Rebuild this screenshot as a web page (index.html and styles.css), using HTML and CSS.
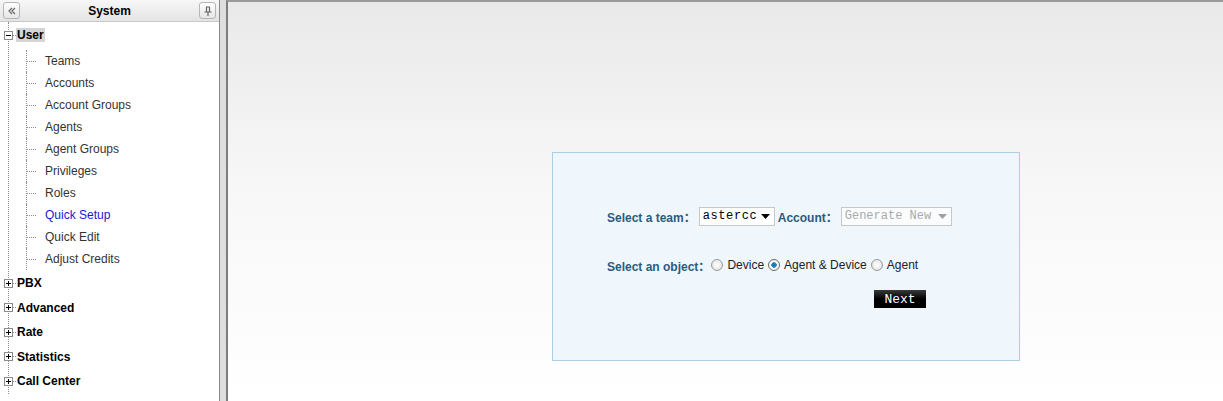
FILE: index.html
```html
<!DOCTYPE html>
<html lang="en">
<head>
    <meta charset="UTF-8">
    <title>Quick Setup</title>
    <link rel="stylesheet" href="styles.css">
</head>
<body>
    <div class="layout">
        <div class="sidebar">
            <div class="side-header">
                <span class="tool-btn">
                    <svg width="10" height="10" viewBox="0 0 10 10"><path d="M5 2 L2 5 L5 8 M8 2 L5 5 L8 8" fill="none" stroke="#666" stroke-width="1.2"/></svg>
                </span>
                <span class="side-title">System</span>
                <span class="tool-btn">
                    <svg width="10" height="10" viewBox="0 0 10 10"><path d="M3 1 H7 M3.5 1 V6 M6.5 1 V6 M1.5 6 H8.5 M5 6 V10" fill="none" stroke="#666" stroke-width="1.2"/></svg>
                </span>
            </div>

            <div class="tree">
                <div class="node open">
                    <div class="node-row">
                        <span class="toggle"><svg width="9" height="9" viewBox="0 0 9 9"><path d="M2 4.5 H7" stroke="#000" stroke-width="1"/></svg></span>
                        <span class="dash"></span>
                        <span class="node-label current">User</span>
                    </div>
                    <ul class="children">
                        <li><span class="dash"></span><a href="#">Teams</a></li>
                        <li><span class="dash"></span><a href="#">Accounts</a></li>
                        <li><span class="dash"></span><a href="#">Account Groups</a></li>
                        <li><span class="dash"></span><a href="#">Agents</a></li>
                        <li><span class="dash"></span><a href="#">Agent Groups</a></li>
                        <li><span class="dash"></span><a href="#">Privileges</a></li>
                        <li><span class="dash"></span><a href="#">Roles</a></li>
                        <li><span class="dash"></span><a href="#" class="active">Quick Setup</a></li>
                        <li><span class="dash"></span><a href="#">Quick Edit</a></li>
                        <li class="last"><span class="dash"></span><a href="#">Adjust Credits</a></li>
                    </ul>
                </div>
                <div class="node">
                    <div class="node-row">
                        <span class="toggle"><svg width="9" height="9" viewBox="0 0 9 9"><path d="M2 4.5 H7 M4.5 2 V7" stroke="#000" stroke-width="1"/></svg></span>
                        <span class="dash"></span>
                        <span class="node-label">PBX</span>
                    </div>
                </div>
                <div class="node">
                    <div class="node-row">
                        <span class="toggle"><svg width="9" height="9" viewBox="0 0 9 9"><path d="M2 4.5 H7 M4.5 2 V7" stroke="#000" stroke-width="1"/></svg></span>
                        <span class="dash"></span>
                        <span class="node-label">Advanced</span>
                    </div>
                </div>
                <div class="node">
                    <div class="node-row">
                        <span class="toggle"><svg width="9" height="9" viewBox="0 0 9 9"><path d="M2 4.5 H7 M4.5 2 V7" stroke="#000" stroke-width="1"/></svg></span>
                        <span class="dash"></span>
                        <span class="node-label">Rate</span>
                    </div>
                </div>
                <div class="node">
                    <div class="node-row">
                        <span class="toggle"><svg width="9" height="9" viewBox="0 0 9 9"><path d="M2 4.5 H7 M4.5 2 V7" stroke="#000" stroke-width="1"/></svg></span>
                        <span class="dash"></span>
                        <span class="node-label">Statistics</span>
                    </div>
                </div>
                <div class="node">
                    <div class="node-row">
                        <span class="toggle"><svg width="9" height="9" viewBox="0 0 9 9"><path d="M2 4.5 H7 M4.5 2 V7" stroke="#000" stroke-width="1"/></svg></span>
                        <span class="dash"></span>
                        <span class="node-label">Call Center</span>
                    </div>
                </div>
            </div>
        </div>

        <div class="splitter"></div>

        <div class="main">
            <div class="setup-box">
                <div class="form-row">
                    <span class="label">Select a team：</span>
                    <span class="select-wrap team">
                        <select>
                            <option>astercc</option>
                        </select>
                        <svg class="arrow" width="9" height="5" viewBox="0 0 9 5"><path d="M0 0 H9 L4.5 5 Z" fill="#000"/></svg>
                    </span>
                    <span class="label account">Account：</span>
                    <span class="select-wrap account-sel disabled">
                        <select disabled>
                            <option>Generate New</option>
                        </select>
                        <svg class="arrow" width="9" height="5" viewBox="0 0 9 5"><path d="M0 0 H9 L4.5 5 Z" fill="#a0a0a0"/></svg>
                    </span>
                </div>
                <div class="form-row object-row">
                    <span class="label">Select an object：</span>
                    <label class="radio"><input type="radio" name="obj">Device</label>
                    <label class="radio"><input type="radio" name="obj" checked>Agent &amp; Device</label>
                    <label class="radio"><input type="radio" name="obj">Agent</label>
                </div>
                <div class="form-row button-row">
                    <button class="next-btn">Next</button>
                </div>
            </div>
        </div>
    </div>
</body>
</html>
```

FILE: styles.css
```css
body {
    margin: 0;
    font-family: 'Liberation Sans', Arial, 'Noto Sans CJK SC', sans-serif;
    font-size: 12px;
    color: #333;
    background: #fff;
}
.layout {
    display: flex;
    width: 1223px;
    height: 401px;
    overflow: hidden;
}

/* left menu */
.sidebar {
    width: 219px;
    border-right: 1px solid #8a8a8a;
    background: #fff;
    flex-shrink: 0;
}
.side-header {
    height: 21px;
    border-bottom: 1px solid #c8c8c8;
    background: linear-gradient(#f7f7f7, #e4e4e4);
    display: flex;
    align-items: center;
    padding: 0 3px;
}
.side-title {
    flex: 1;
    text-align: center;
    font-weight: bold;
    font-size: 12px;
    color: #000;
}
.tool-btn {
    width: 15px;
    height: 15px;
    border: 1px solid #b5b5b5;
    border-radius: 3px;
    background: linear-gradient(#ffffff, #e6e6e6);
    display: flex;
    align-items: center;
    justify-content: center;
}
.tree {
    margin-left: 8px;
    padding-top: 2px;
    border-left: 1px dotted #8c8c8c;
}
.node-row {
    display: flex;
    align-items: center;
    height: 24.5px;
}
.open > .node-row {
    height: 22px;
}
.toggle {
    margin-left: -5px;
    width: 9px;
    height: 9px;
    box-sizing: border-box;
    border: 1px solid #8c8c8c;
    background: #fff;
    display: flex;
}
.toggle svg {
    margin: -1px;
}
.dash {
    width: 4px;
    border-top: 1px dotted #8c8c8c;
}
.node-row .dash {
    width: 3px;
    margin-right: 1px;
}
.node-label {
    font-weight: bold;
    font-size: 12px;
    color: #000;
}
.node-label.current {
    background: #d5d5d5;
    padding: 0 1px;
    margin-left: -1px;
}
.children {
    list-style: none;
    margin: 0 0 1px 17px;
    padding: 4px 0 0;
}
.children li {
    display: flex;
    align-items: center;
    height: 22px;
    border-left: 1px dotted #8c8c8c;
}
.children li:first-child {
    background: linear-gradient(#fff 4px, transparent 4px);
}
.children li .dash {
    width: 9px;
    margin-right: 9px;
}
.children a {
    color: #333;
    text-decoration: none;
    font-size: 12px;
}
.children a.active {
    color: #1a1acd;
}

.splitter {
    width: 6px;
    background: #dedede;
    flex-shrink: 0;
}

/* main area */
.main {
    flex: 1;
    border-left: 2px solid #7d7d7d;
    border-top: 2px solid #9a9a9a;
    background: linear-gradient(#e9e9e9 0, #f7f7f7 45%, #fff 100%);
    padding: 150px 0 0 324px;
}
.setup-box {
    border: 1px solid #a9d0e2;
    background: #eff7fd;
    padding-top: 53px;
    padding-left: 54px;
    box-sizing: border-box;
    width: 468px;
    height: 209px;
}
.form-row {
    display: flex;
    align-items: center;
    height: 20px;
}
.label {
    font-weight: bold;
    color: #2b5b7c;
    font-size: 12px;
}
.label.account {
    margin-left: 3px;
    margin-right: 3px;
}
.select-wrap {
    position: relative;
    display: inline-block;
    height: 19px;
    margin-left: 3px;
}
.select-wrap select {
    appearance: none;
    -webkit-appearance: none;
    height: 19px;
    box-sizing: border-box;
    border: 1px solid #a6a6a6;
    background: #fff;
    font-family: 'Liberation Mono', 'DejaVu Sans Mono', monospace;
    font-size: 12px;
    color: #000;
    padding: 0 0 0 3px;
    border-radius: 0;
}
.team select {
    width: 76px;
    border-color: #c8c8c8;
    letter-spacing: 0.6px;
}
.account-sel {
    margin-left: 0;
}
.account-sel select {
    width: 111px;
    color: #8a8a8a;
    border-color: #b5b5b5;
    background: #fff;
}
.select-wrap .arrow {
    position: absolute;
    right: 5px;
    top: 7px;
}
.object-row {
    margin-top: 29px;
}
.radio {
    display: flex;
    align-items: center;
    color: #222;
    font-size: 12px;
}
.radio input {
    appearance: none;
    -webkit-appearance: none;
    width: 12px;
    height: 12px;
    margin: 0 4px 0 4px;
    border: 1px solid #9a9a9a;
    border-radius: 50%;
    background: radial-gradient(#ffffff, #dcdcdc);
    box-sizing: border-box;
}
.object-row .radio:first-of-type input {
    margin-left: 1px;
}
.radio input:checked {
    background: radial-gradient(circle, #1b6fa8 0, #2a86c0 2.5px, #fff 3px, #e6e6e6 100%);
    border-color: #6a6a6a;
}
.button-row {
    margin-top: 14px;
    padding-left: 267px;
}
.next-btn {
    width: 52px;
    height: 18px;
    border: none;
    background: linear-gradient(#3a3a3a 0, #000 50%, #000 100%);
    color: #fff;
    font-family: 'Liberation Mono', 'DejaVu Sans Mono', monospace;
    font-size: 13px;
    padding: 0;
    cursor: pointer;
}
```
